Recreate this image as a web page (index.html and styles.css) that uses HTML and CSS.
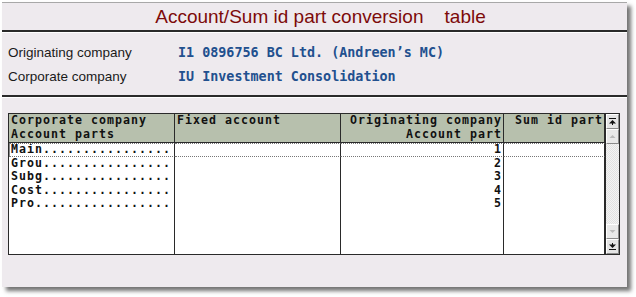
FILE: index.html
```html
<!DOCTYPE html>
<html>
<head>
<meta charset="utf-8">
<link rel="stylesheet" href="styles.css">
</head>
<body>
<div class="window">
  <div class="titlebar"><h1 class="title">Account/Sum id part conversion    table</h1></div>
  <div class="info">
    <div class="info-row"><span class="label">Originating company</span><span class="value">I1 0896756 BC Ltd. (Andreen’s MC)</span></div>
    <div class="info-row"><span class="label">Corporate company</span><span class="value">IU Investment Consolidation</span></div>
  </div>
  <div class="content">
    <div class="tablebox">
      <div class="grid">
        <div class="hcell">Corporate company<br>Account parts</div>
        <div class="hcell">Fixed account</div>
        <div class="hcell right">Originating company<br>Account part</div>
        <div class="hcell right">Sum id part</div>

        <div class="cell focus first">Main................</div>
        <div class="cell focus"></div>
        <div class="cell focus right">1</div>
        <div class="cell focus last"></div>

        <div class="cell">Grou................</div>
        <div class="cell"></div>
        <div class="cell right">2</div>
        <div class="cell"></div>

        <div class="cell">Subg................</div>
        <div class="cell"></div>
        <div class="cell right">3</div>
        <div class="cell"></div>

        <div class="cell">Cost................</div>
        <div class="cell"></div>
        <div class="cell right">4</div>
        <div class="cell"></div>

        <div class="cell">Pro.................</div>
        <div class="cell"></div>
        <div class="cell right">5</div>
        <div class="cell"></div>

        <div class="cell filler"></div>
        <div class="cell filler"></div>
        <div class="cell filler"></div>
        <div class="cell filler"></div>
      </div>
      <div class="scrollbar">
        <div class="sbtn"><svg width="9" height="9" viewBox="0 0 9 9"><rect x="1" y="1" width="7" height="1" fill="#111"/><path d="M4.5 3 L8 6.5 L1 6.5 Z" fill="#111"/><rect x="4" y="6" width="1" height="2" fill="#111"/></svg></div>
        <div class="sbtn dis"><svg width="9" height="9" viewBox="0 0 9 9"><path d="M4.5 3 L7.5 6 L1.5 6 Z" fill="#bbb"/></svg></div>
        <div class="track"></div>
        <div class="sbtn dis"><svg width="9" height="9" viewBox="0 0 9 9"><path d="M1.5 3 L7.5 3 L4.5 6 Z" fill="#bbb"/></svg></div>
        <div class="sbtn"><svg width="9" height="9" viewBox="0 0 9 9"><rect x="4" y="1" width="1" height="2" fill="#111"/><path d="M1 2.5 L8 2.5 L4.5 6 Z" fill="#111"/><rect x="1" y="7" width="7" height="1" fill="#111"/></svg></div>
      </div>
    </div>
  </div>
</div>
</body>
</html>
```
FILE: styles.css
```css
html, body {
  margin: 0;
  padding: 0;
  background: #ffffff;
}
body {
  width: 636px;
  height: 297px;
  overflow: hidden;
}
.window {
  margin: 2px 0 0 2px;
  width: 625px;
  height: 285px;
  background: #eeeaee;
  border-top: 1px solid #a8a8a8;
  box-sizing: border-box;
  box-shadow: 4px 4px 4px rgba(0, 0, 0, 0.55);
  display: flex;
  flex-direction: column;
}
.titlebar {
  height: 27px;
  border-bottom: 2px solid #2a2a2a;
  box-shadow: 0 1px 0 #ffffff;
  display: flex;
  align-items: center;
  justify-content: center;
}
.title {
  margin: 0;
  font: normal 19px "Liberation Sans", Arial, sans-serif;
  color: #7d0a0a;
  white-space: pre;
  padding: 1px 0 0 12px;
}
.info {
  padding: 8px 0 7px 6px;
  border-bottom: 2px solid #2a2a2a;
  box-shadow: 0 1px 0 #ffffff;
}
.info-row {
  height: 24px;
  display: flex;
  align-items: center;
}
.label {
  width: 170px;
  font: 13.5px "Liberation Sans", Arial, sans-serif;
  color: #1a1a1a;
}
.value {
  font: bold 13.4px "DejaVu Sans Mono", monospace;
  color: #22508e;
  white-space: pre;
}
.content {
  padding: 16px 0 0 6px;
}
.tablebox {
  width: 612px;
  height: 142px;
  border: 1px solid #2a2a2a;
  box-sizing: border-box;
  display: flex;
  background: #ffffff;
}
.grid {
  display: grid;
  grid-template-columns: 166px 166px 163px 101px;
  grid-template-rows: 29px repeat(5, 13.6px) 1fr;
  font: bold 11.6px "DejaVu Sans Mono", monospace;
  letter-spacing: 1.02px;
  color: #111;
}
.hcell {
  background: #b7c0ad;
  border-right: 1px solid #2a2a2a;
  border-bottom: 1px solid #2a2a2a;
  padding: 0 2px 0 2px;
  line-height: 13.6px;
  white-space: pre;
  overflow: hidden;
}
.cell {
  border-right: 1px solid #2a2a2a;
  padding: 0 2px;
  line-height: 13.6px;
  white-space: pre;
  overflow: hidden;
}
.right {
  text-align: right;
}
.hcell.right,
.cell.right {
  padding-right: 1px;
}
.focus {
  border-top: 1px dotted #777;
  border-bottom: 1px dotted #777;
  line-height: 11.6px;
}
.focus.first {
  box-shadow: inset 1px 0 0 #888;
}
.scrollbar {
  width: 15px;
  display: flex;
  flex-direction: column;
  background: #ecebeb;
  border-left: 1px solid #2a2a2a;
}
.sbtn {
  height: 13px;
  display: flex;
  align-items: center;
  justify-content: center;
  background: #e4e4e4;
  border-top: 1px solid #ffffff;
  border-left: 1px solid #ffffff;
  border-bottom: 1px solid #8a8a8a;
  border-right: 1px solid #8a8a8a;
}
.sbtn.dis {
  background: #e9e9e9;
}
.track {
  flex: 1;
  background-color: #ececec;
  background-image: repeating-conic-gradient(#f4f4f4 0 25%, #e2e2e2 0 50%);
  background-size: 2px 2px;
}
```
